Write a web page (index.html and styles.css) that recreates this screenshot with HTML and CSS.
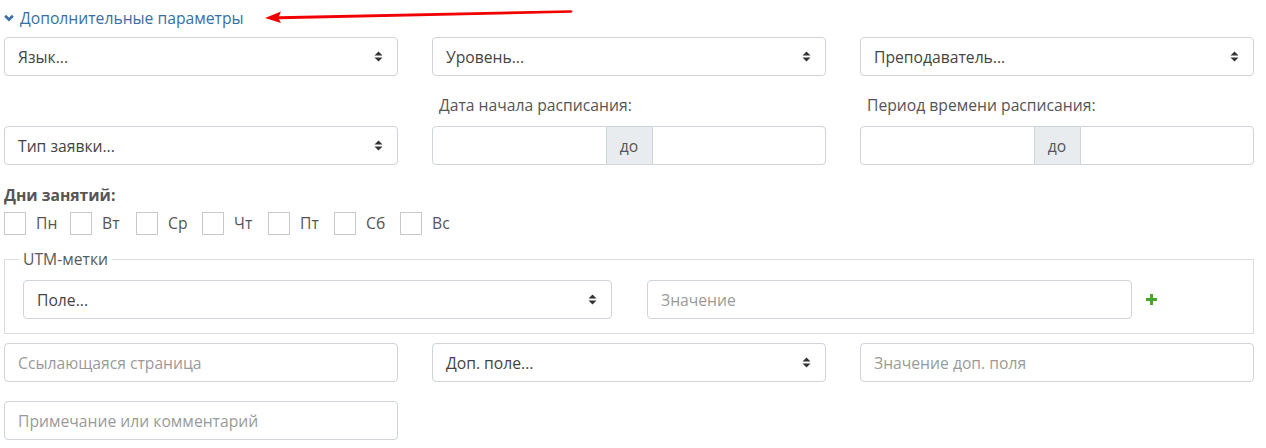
FILE: index.html
```html
<!DOCTYPE html>
<html lang="ru">
<head>
<meta charset="utf-8">
<title>Дополнительные параметры</title>
<link rel="stylesheet" href="styles.css">
</head>
<body>
<div class="page">
  <div class="toggle">
    <a class="toggle-link" href="#">
      <svg class="chev" width="10" height="8" viewBox="0 0 10 8"><path d="M1.2 1.8 L5 5.6 L8.8 1.8" fill="none" stroke="#3a6ea5" stroke-width="2.7"/></svg>
      <span>Дополнительные параметры</span>
    </a>
    <svg class="arrow" width="320" height="14" viewBox="0 0 320 14"><path d="M0 9 L16 2.5 L14 7.2 L306 1.2 Q309 2.3 306 3.8 L14 10.2 L16 14 Z" fill="#f00000"/></svg>
  </div>

  <div class="row row-1">
    <div class="select"><span>Язык...</span><svg class="updown" width="9" height="11" viewBox="0 0 9 11"><path d="M4.5 0.5 L8.5 4.5 L0.5 4.5 Z M0.5 6.5 L8.5 6.5 L4.5 10.5 Z" fill="#333"/></svg></div>
    <div class="select"><span>Уровень...</span><svg class="updown" width="9" height="11" viewBox="0 0 9 11"><path d="M4.5 0.5 L8.5 4.5 L0.5 4.5 Z M0.5 6.5 L8.5 6.5 L4.5 10.5 Z" fill="#333"/></svg></div>
    <div class="select"><span>Преподаватель...</span><svg class="updown" width="9" height="11" viewBox="0 0 9 11"><path d="M4.5 0.5 L8.5 4.5 L0.5 4.5 Z M0.5 6.5 L8.5 6.5 L4.5 10.5 Z" fill="#333"/></svg></div>
  </div>

  <div class="row row-2">
    <div class="cell">
      <div class="select"><span>Тип заявки...</span><svg class="updown" width="9" height="11" viewBox="0 0 9 11"><path d="M4.5 0.5 L8.5 4.5 L0.5 4.5 Z M0.5 6.5 L8.5 6.5 L4.5 10.5 Z" fill="#333"/></svg></div>
    </div>
    <div class="cell">
      <label class="field-label">Дата начала расписания:</label>
      <div class="range">
        <input class="range-input" type="text">
        <span class="addon">до</span>
        <input class="range-input" type="text">
      </div>
    </div>
    <div class="cell">
      <label class="field-label">Период времени расписания:</label>
      <div class="range">
        <input class="range-input" type="text">
        <span class="addon">до</span>
        <input class="range-input" type="text">
      </div>
    </div>
  </div>

  <div class="days">
    <div class="days-title">Дни занятий:</div>
    <div class="days-list">
      <label class="day"><span class="box"></span>Пн</label>
      <label class="day"><span class="box"></span>Вт</label>
      <label class="day"><span class="box"></span>Ср</label>
      <label class="day"><span class="box"></span>Чт</label>
      <label class="day"><span class="box"></span>Пт</label>
      <label class="day"><span class="box"></span>Сб</label>
      <label class="day"><span class="box"></span>Вс</label>
    </div>
  </div>

  <fieldset class="utm">
    <legend>UTM-метки</legend>
    <div class="utm-row">
      <div class="select"><span>Поле...</span><svg class="updown" width="9" height="11" viewBox="0 0 9 11"><path d="M4.5 0.5 L8.5 4.5 L0.5 4.5 Z M0.5 6.5 L8.5 6.5 L4.5 10.5 Z" fill="#333"/></svg></div>
      <input class="input" type="text" placeholder="Значение">
      <svg class="plus" width="11" height="11" viewBox="0 0 11 11"><path d="M4 0 H7 V4 H11 V7 H7 V11 H4 V7 H0 V4 H4 Z" fill="#4aa52e"/></svg>
    </div>
  </fieldset>

  <div class="row row-4">
    <input class="input" type="text" placeholder="Ссылающаяся страница">
    <div class="select"><span>Доп. поле...</span><svg class="updown" width="9" height="11" viewBox="0 0 9 11"><path d="M4.5 0.5 L8.5 4.5 L0.5 4.5 Z M0.5 6.5 L8.5 6.5 L4.5 10.5 Z" fill="#333"/></svg></div>
    <input class="input" type="text" placeholder="Значение доп. поля">
  </div>

  <div class="row row-5">
    <input class="input" type="text" placeholder="Примечание или комментарий">
  </div>
</div>
</body>
</html>
```

FILE: styles.css
```css
* { box-sizing: border-box; }

html, body {
  margin: 0;
  padding: 0;
  background: #fff;
}

body {
  font-family: "Open Sans", "Noto Sans", "DejaVu Sans", sans-serif;
  font-size: 15.7px;
  color: #555;
}

.page {
  width: 1266px;
  padding: 0 12px 0 4px;
}

.toggle {
  position: relative;
  height: 37px;
  padding-top: 5px;
}

.toggle-link {
  display: inline-flex;
  align-items: center;
  gap: 6px;
  color: #3a6ea5;
  text-decoration: none;
  font-size: 15.7px;
  line-height: 22px;
}

.chev { display: block; margin-top: 1px; }

.arrow {
  position: absolute;
  left: 261px;
  top: 9px;
}

.row {
  display: grid;
  grid-template-columns: 394px 394px 394px;
  column-gap: 34px;
}

.row-2 {
  margin-top: 19px;
  align-items: end;
}

.cell { display: flex; flex-direction: column; }

.field-label {
  display: block;
  padding-left: 7px;
  line-height: 21px;
  margin-bottom: 10px;
  color: #555;
}

.select {
  height: 39px;
  border: 1px solid #ced4da;
  border-radius: 4px;
  background: #fff;
  display: flex;
  align-items: center;
  justify-content: space-between;
  padding: 0 14px 0 13px;
  color: #444;
}

.updown { display: block; }

.input, .range-input {
  height: 39px;
  border: 1px solid #ced4da;
  border-radius: 4px;
  background: #fff;
  padding: 0 13px;
  font-family: inherit;
  font-size: 15.7px;
  color: #444;
  width: 100%;
  outline: none;
}

.input::placeholder { color: #9a9a9a; }

.range {
  display: flex;
  height: 39px;
}

.range-input {
  flex: 1 1 0;
  min-width: 0;
}

.range-input:first-child {
  border-top-right-radius: 0;
  border-bottom-right-radius: 0;
}

.range-input:last-child {
  border-top-left-radius: 0;
  border-bottom-left-radius: 0;
}

.addon {
  width: 45px;
  flex: 0 0 45px;
  background: #e9ecef;
  border-top: 1px solid #ced4da;
  border-bottom: 1px solid #ced4da;
  display: flex;
  align-items: center;
  justify-content: center;
  color: #555;
}

.days { margin-top: 20px; }

.days-title {
  font-weight: bold;
  line-height: 20px;
  color: #555;
}

.days-list {
  display: flex;
  margin-top: 7px;
}

.day {
  width: 66px;
  display: flex;
  align-items: center;
  gap: 10px;
  line-height: 23px;
  color: #555;
}

.box {
  width: 22px;
  height: 23px;
  border: 1px solid #c8c8c8;
  background: #fff;
  flex: 0 0 22px;
}

.utm {
  margin: 14px 0 0;
  border: 1px solid #dcdcdc;
  padding: 11px 18px 14px;
  min-width: 0;
}

.utm legend {
  padding: 0 4px;
  margin-left: -4px;
  font-size: 15.7px;
  line-height: 20px;
  color: #5a5a5a;
}

.utm-row {
  display: grid;
  grid-template-columns: 589px 485px auto;
  column-gap: 35px;
  align-items: center;
}

.utm-row .plus {
  margin-left: -21px;
  display: block;
}

.row-4 { margin-top: 9px; }

.row-5 { margin-top: 19px; }
```
